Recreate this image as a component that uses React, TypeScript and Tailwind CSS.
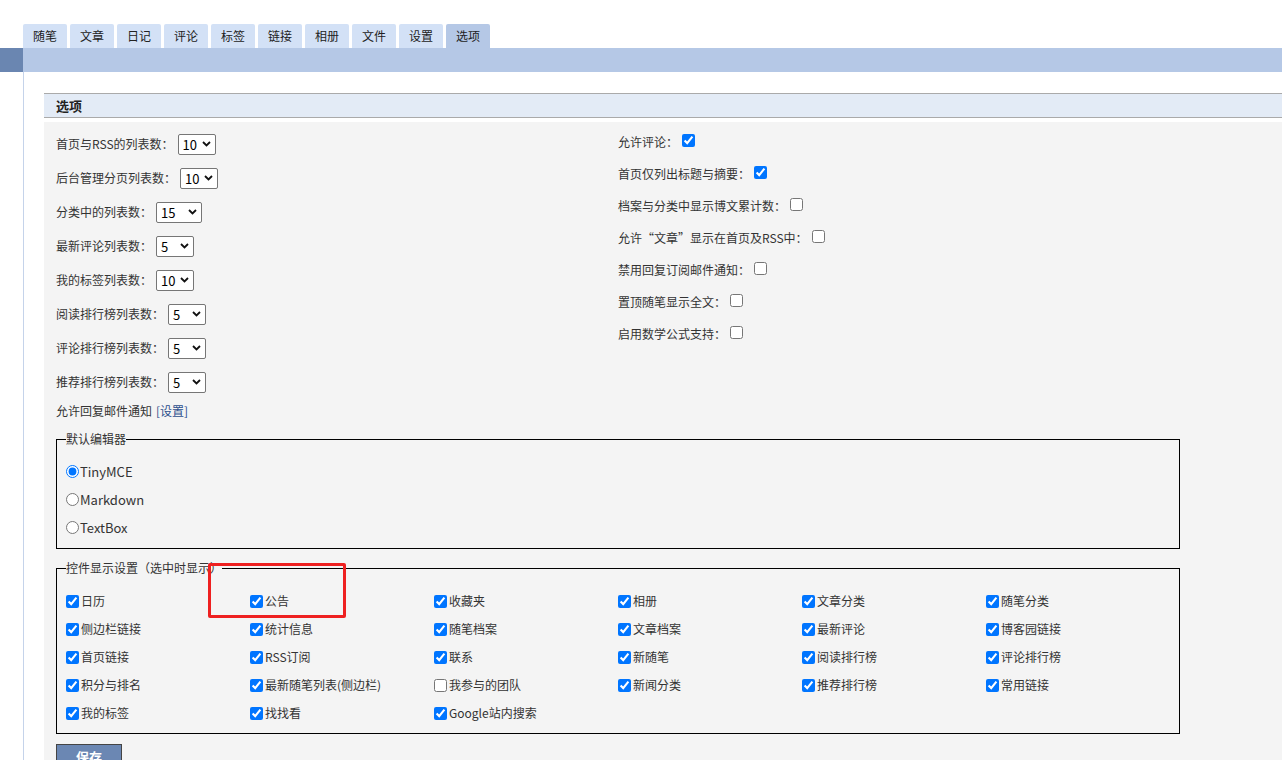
import React from "react";

const tabs = ["随笔", "文章", "日记", "评论", "标签", "链接", "相册", "文件", "设置", "选项"];

const leftRows: { label: string; value: string; w: string }[] = [
  { label: "首页与RSS的列表数：", value: "10", w: "w-[38px]" },
  { label: "后台管理分页列表数：", value: "10", w: "w-[38px]" },
  { label: "分类中的列表数：", value: "15", w: "w-[46px]" },
  { label: "最新评论列表数：", value: "5", w: "w-[38px]" },
  { label: "我的标签列表数：", value: "10", w: "w-[38px]" },
  { label: "阅读排行榜列表数：", value: "5", w: "w-[38px]" },
  { label: "评论排行榜列表数：", value: "5", w: "w-[38px]" },
  { label: "推荐排行榜列表数：", value: "5", w: "w-[38px]" },
];

const rightRows: { label: string; checked: boolean }[] = [
  { label: "允许评论：", checked: true },
  { label: "首页仅列出标题与摘要：", checked: true },
  { label: "档案与分类中显示博文累计数：", checked: false },
  { label: "允许“文章”显示在首页及RSS中：", checked: false },
  { label: "禁用回复订阅邮件通知：", checked: false },
  { label: "置顶随笔显示全文：", checked: false },
  { label: "启用数学公式支持：", checked: false },
];

const widgets: { label: string; checked: boolean }[] = [
  { label: "日历", checked: true },
  { label: "公告", checked: true },
  { label: "收藏夹", checked: true },
  { label: "相册", checked: true },
  { label: "文章分类", checked: true },
  { label: "随笔分类", checked: true },
  { label: "侧边栏链接", checked: true },
  { label: "统计信息", checked: true },
  { label: "随笔档案", checked: true },
  { label: "文章档案", checked: true },
  { label: "最新评论", checked: true },
  { label: "博客园链接", checked: true },
  { label: "首页链接", checked: true },
  { label: "RSS订阅", checked: true },
  { label: "联系", checked: true },
  { label: "新随笔", checked: true },
  { label: "阅读排行榜", checked: true },
  { label: "评论排行榜", checked: true },
  { label: "积分与排名", checked: true },
  { label: "最新随笔列表(侧边栏)", checked: true },
  { label: "我参与的团队", checked: false },
  { label: "新闻分类", checked: true },
  { label: "推荐排行榜", checked: true },
  { label: "常用链接", checked: true },
  { label: "我的标签", checked: true },
  { label: "找找看", checked: true },
  { label: "Google站内搜索", checked: true },
];

function FakeSelect({ value, w }: { value: string; w: string }) {
  return (
    <span
      className={`ml-[4px] inline-flex h-[21px] ${w} items-center justify-between rounded-[2px] border border-[#767676] bg-white pl-[4px] pr-[4px] text-[13px] leading-none text-black`}
    >
      <span>{value}</span>
      <svg width="9" height="6" viewBox="0 0 9 6" className="shrink-0">
        <polyline points="1,1 4.5,4.5 8,1" fill="none" stroke="#111" strokeWidth="1.8" />
      </svg>
    </span>
  );
}

export default function App() {
  return (
    <div className="min-h-[800px] bg-white font-['Noto_Sans_CJK_SC','Microsoft_YaHei',sans-serif] text-[12px] text-[#333]">
      {/* tabs */}
      <div className="flex gap-[3px] pl-[23px] pt-[24px]">
        {tabs.map((t, i) => (
          <div
            key={t}
            className={`flex h-[24px] w-[44px] items-center justify-center rounded-t-[2px] text-[12px] leading-none text-[#222] ${
              i === tabs.length - 1 ? "bg-[#b5c8e6]" : "bg-[#d3e1f6]"
            }`}
          >
            {t}
          </div>
        ))}
      </div>
      {/* bar */}
      <div className="flex h-[24px]">
        <div className="w-[23px] bg-[#6a86b1]" />
        <div className="flex-1 bg-[#b5c8e6]" />
      </div>
      {/* main */}
      <div className="ml-[23px] border-l border-[#c5d3ea] pl-[20px] pt-[21px]">
        <div className="flex h-[25px] items-center border-t border-b border-t-[#aaaaaa] border-b-[#aaaaaa] border-b-dashed bg-[#e3ebf6] pl-[12px] text-[13px] font-bold leading-none text-[#222]">
          选项
        </div>
        <div className="mt-[4px] bg-[#f4f4f4] pb-[40px] pl-[12px]">
          <div className="flex w-[1124px]">
            <div className="w-1/2 pt-[5px]">
              {leftRows.map((r) => (
                <div key={r.label} className="flex h-[34px] items-center leading-none">
                  <span>{r.label}</span>
                  <FakeSelect value={r.value} w={r.w} />
                </div>
              ))}
            </div>
            <div className="w-1/2 pt-[4px]">
              {rightRows.map((r) => (
                <div key={r.label} className="flex h-[32px] items-center leading-none">
                  <span>{r.label}</span>
                  <input
                    type="checkbox"
                    defaultChecked={r.checked}
                    className="mb-[3px] ml-[4px] h-[13px] w-[13px]"
                  />
                </div>
              ))}
            </div>
          </div>
          <div className="flex h-[24px] items-center leading-none">
            <span>允许回复邮件通知</span>
            <span className="ml-[4px] text-[#2c4f8c]">[设置]</span>
          </div>

          <fieldset className="mt-[7px] w-[1124px] border border-black pb-[7px] pl-[9px] pt-[9px]">
            <legend className="p-0 text-[12px] leading-[18px]">默认编辑器</legend>
            {["TinyMCE", "Markdown", "TextBox"].map((e, i) => (
              <label key={e} className="flex h-[28px] items-center leading-none">
                <input type="radio" name="editor" defaultChecked={i === 0} className="h-[13px] w-[13px]" />
                <span className="ml-[1px] text-[13px]">{e}</span>
              </label>
            ))}
          </fieldset>

          <div className="relative mt-[10px] w-[1124px]">
            <fieldset className="w-[1124px] border border-black pb-[6px] pl-[9px] pt-[10px]">
              <legend className="p-0 text-[12px] leading-[18px]">控件显示设置（选中时显示）</legend>
              <div className="grid w-[1104px] grid-cols-6">
                {widgets.map((w) => (
                  <label key={w.label} className="flex h-[28px] items-center leading-none">
                    <input type="checkbox" defaultChecked={w.checked} className="h-[13px] w-[13px]" />
                    <span className="ml-[2px]">{w.label}</span>
                  </label>
                ))}
              </div>
            </fieldset>
            <div className="absolute left-[152px] top-[4px] h-[55px] w-[138px] rounded-[2px] border-[3px] border-[#ee2020]" />
          </div>

          <button className="mt-[10px] h-[26px] w-[66px] border border-[#444] bg-[#6b87b3] text-[13px] font-bold text-white">
            保存
          </button>
        </div>
      </div>
    </div>
  );
}
